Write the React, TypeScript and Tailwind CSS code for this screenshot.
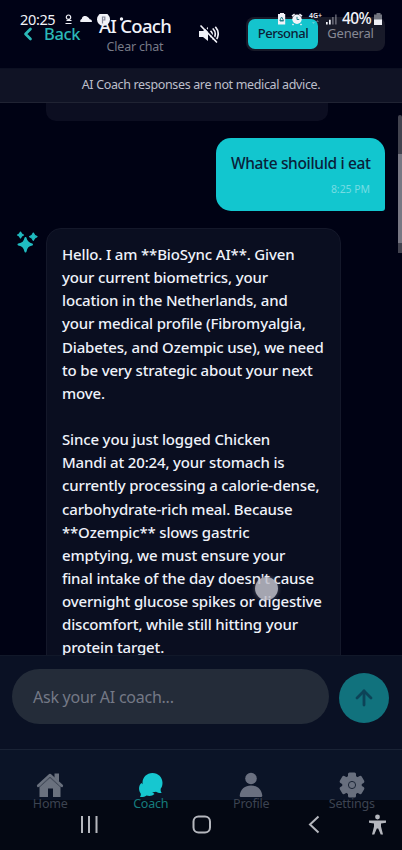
import { ArrowUp, ChevronLeft } from "lucide-react";

const replyLines = [
  "Hello. I am **BioSync AI**. Given",
  "your current biometrics, your",
  "location in the Netherlands, and",
  "your medical profile (Fibromyalgia,",
  "Diabetes, and Ozempic use), we need",
  "to be very strategic about your next",
  "move.",
  "",
  "Since you just logged Chicken",
  "Mandi at 20:24, your stomach is",
  "currently processing a calorie-dense,",
  "carbohydrate-rich meal. Because",
  "**Ozempic** slows gastric",
  "emptying, we must ensure your",
  "final intake of the day doesn't cause",
  "overnight glucose spikes or digestive",
  "discomfort, while still hitting your",
  "protein target.",
];

function StatusBar() {
  return (
    <div className="absolute inset-x-0 top-0 z-20 h-[38px] text-[#f1f2f8]">
      <span className="absolute left-[20px] top-[9px] text-[14.5px] leading-[20px] tracking-[-0.35px]">20:25</span>
      <svg className="absolute left-[64px] top-[14px]" width="62" height="14" viewBox="0 0 62 14" fill="currentColor">
        <circle cx="4.5" cy="3.2" r="2.2" fill="none" stroke="currentColor" strokeWidth="1.2" />
        <path d="M2.500 6.500h5M1.500 9.500h6" stroke="currentColor" strokeWidth="1.100" />
        <path d="M16.500 8a2 2 0 0 1 1.200-3 3.500 3.500 0 0 1 6-2 4 4 0 0 1 2 2.200c1.500.2 2.500 1.200 2.200 2.800z" />
        <circle cx="39.500" cy="5.300" r="6.500" />
        <path d="M38.500 9.500V3h2.300v3h-2" fill="none" stroke="#85879a" strokeWidth="1.200" />
        <circle cx="57.500" cy="5" r="1.700" />
      </svg>
      <svg className="absolute left-[277px] top-[13px]" width="62" height="14" viewBox="0 0 62 14" fill="currentColor">
        <path d="M3 0h4v1h1.200v10.500H1V1h2z" />
        <path d="M2.800 7.500 4.600 4l2 3.500zM3 8h3.600" fill="none" stroke="#26818c" strokeWidth="1" />
        <circle cx="20" cy="6.300" r="4.700" />
        <path d="m15 3.200 2.600-2M25 3.200l-2.600-2M16.500 11l-1 1M23.500 11l1 1" stroke="currentColor" strokeWidth="1.500" />
        <path d="M20 3.800v2.700h2.200" fill="none" stroke="#26818c" strokeWidth="1" />
        <path d="m35 9 1.500 2L38 9zM39 9l1.500-2 1.500 2z" opacity=".35" />
        <path d="M49 9h1.700v2.500H49zM52 6.700h1.700v4.800H52z" />
        <path d="M55 4h1.700v7.500H55zM58 1.500h1.700v10H58z" opacity=".35" />
      </svg>
      <span className="absolute left-[309px] top-[11px] text-[7px] font-semibold leading-[10px]">4G+</span>
      <span className="absolute left-[342px] top-[8px] text-[15.5px] font-medium leading-[20px] tracking-[-0.6px]">40%</span>
      <svg className="absolute left-[374px] top-[13px]" width="9" height="12" viewBox="0 0 9 12">
        <path d="M2.500 0h4v1.500H8V7H0V1.500h2.500z" fill="#71747f" />
        <path d="M0 6.500h8V12H0z" fill="#f1f2f8" />
      </svg>
    </div>
  );
}

function Header() {
  return (
    <header className="relative flex h-[68px] shrink-0 items-start bg-[#000216]">
      <div className="ml-[18px] mt-[24px] flex w-[70px] items-center text-[#2bb9b8]">
        <ChevronLeft className="h-5 w-5 shrink-0" strokeWidth={3.2} />
        <span className="ml-[6px] text-[16.5px] font-medium leading-[20px] tracking-[-0.4px]">Back</span>
      </div>
      <div className="ml-[6px] mt-[14px] flex w-[82px] flex-col items-center whitespace-nowrap">
        <h1 className="text-[18.5px] font-medium leading-[24px] tracking-[-0.7px] text-[#f1f3fa]">AI Coach</h1>
        <span className="text-[12.5px] leading-[18px] tracking-[-0.2px] text-[#777a87]">Clear chat</span>
      </div>
      <svg className="ml-[23px] mt-[24px]" width="20" height="20" viewBox="0 0 20 20" fill="none" stroke="#f1f2f8" strokeWidth="1.700" strokeLinecap="round">
        <path d="M0 7h4l5-4v14l-5-4H0z" fill="#f1f2f8" stroke="none" />
        <path d="M12 7.400a4 4 0 0 1 0 5.200M14.200 5a7 7 0 0 1 0 10M16.700 3.300a10 10 0 0 1 0 13.200" />
        <path d="M3.500 1 18 16.500" stroke="#000216" strokeWidth="1.600" />
        <path d="M2 2l15.500 16" />
      </svg>
      <div className="ml-[27px] mt-[17px] flex h-[34px] w-[139px] rounded-lg bg-[#181a29] p-[2px] text-[13px] font-medium tracking-[-0.45px]">
        <div className="flex h-[30px] w-[70px] items-center justify-center rounded-[7px] bg-[#14c4cd] text-[#0b2036]">Personal</div>
        <div className="flex h-[30px] w-[65px] items-center justify-center font-normal tracking-[-0.2px] text-[#868894]">General</div>
      </div>
    </header>
  );
}

function Sparkles() {
  return (
    <svg className="ml-[16px] mt-[3px] shrink-0" width="23" height="23" viewBox="0 0 23 23" fill="#20bdc2">
      <path
        d="M9.500 7c1 4 2.500 5.500 6.500 6.500-4 1-5.500 2.500-6.500 7-1-4.500-2.500-6-7-7 4.500-1 6-2.500 7-6.500z"
        stroke="#20bdc2"
        strokeWidth="2"
        strokeLinejoin="round"
      />
      <path
        d="M4.500 1c.6 1.900 1.200 2.500 3 3-1.800.6-2.400 1.200-3 3-.6-1.800-1.200-2.400-3-3 1.800-.5 2.400-1.100 3-3zM17.300 2c.7 2.300 1.500 3.100 3.700 3.700-2.200.7-3 1.500-3.700 3.700-.7-2.200-1.500-3-3.700-3.700 2.200-.6 3-1.400 3.700-3.700z"
        stroke="#20bdc2"
        strokeWidth="1.200"
        strokeLinejoin="round"
      />
    </svg>
  );
}

function Chat() {
  return (
    <main className="relative h-[552px] shrink-0 overflow-hidden bg-[#000214]">
      <div className="ml-[46px] h-[18px] w-[282px] rounded-b-[10px] bg-[#0c0e21]" />
      <div className="ml-auto mr-[17px] mt-[17px] flex h-[73px] w-[169px] flex-col rounded-[15px] rounded-br-[3px] bg-[#12c6cf] px-[15px] pt-[14px]">
        <p className="whitespace-nowrap text-[15.5px] font-medium leading-[23px] tracking-[-0.35px] text-[#092039]">Whate shoiluld i eat</p>
        <span className="mt-[6px] self-end text-[10.5px] leading-[16px] tracking-[-0.05px] text-[#75dce3]">8:25 PM</span>
      </div>
      <div className="mt-[17px] flex items-start">
        <Sparkles />
        <div className="ml-[7px] h-[460px] w-[295px] rounded-tl-[15px] rounded-tr-[15px] border border-[#14182a] bg-[#0a0e20] pl-[15px] pt-[14px] text-[15px] font-medium leading-[23.15px] tracking-[-0.16px] text-[#eff2fa]">
          {replyLines.map((line, i) => (
            <p key={i} className="h-[23.15px] whitespace-nowrap">
              {line}
            </p>
          ))}
        </div>
      </div>
      <div className="absolute right-0 top-[12px] h-[138px] w-[4px] rounded-t bg-[#42434f]" />
      <div className="absolute right-0 top-[51px] h-[89px] w-[4px] bg-[#777783]" />
      <div className="absolute left-[255px] top-[474px] h-[23px] w-[23px] rounded-full bg-[#bfc0ca]/85 shadow-[0_0_4px_#bfc0ca60]" />
    </main>
  );
}

function Composer() {
  return (
    <div className="flex h-[94px] shrink-0 items-start border-t border-[#111829] bg-[#0a1124] pl-[12px] pt-[13px]">
      <div className="flex h-[55px] w-[317px] items-center rounded-full bg-[#242c39] pl-[21px] text-[16px] tracking-[-0.25px] text-[#747986]">
        Ask your AI coach...
      </div>
      <div className="ml-[10px] mt-[4px] flex h-[50px] w-[50px] items-center justify-center rounded-full bg-[#11727d]">
        <ArrowUp className="h-6 w-6 text-[#0c4357]" strokeWidth={2.8} />
      </div>
    </div>
  );
}

function HomeIcon() {
  return (
    <svg width="28" height="26" viewBox="0 0 28 26" fill="#6a717e">
      <path d="M14 5 24.500 14v11H17v-8.500h-5V25H3.500V14z" />
      <path d="M18.500 1.500H23V10l-4.500-4z" />
      <path d="M2.200 13.800 14 3l11.800 10.800" fill="none" stroke="#6a717e" strokeWidth="2.600" strokeLinecap="round" strokeLinejoin="round" />
      <path d="M4 14.700 14 5.600l10 9.100" fill="none" stroke="#2c3443" strokeWidth=".6" />
    </svg>
  );
}

function ChatIcon() {
  return (
    <svg width="28" height="26" viewBox="0 0 28 26" fill="#16c7d0">
      <path d="M3 25c.8-1.200 1-2.300.7-3.500C1.500 18.500 1.300 13.500 4.500 11l13 11c-2 2-5 2.500-8 1.500-1.800 1.300-4 1.800-6.500 1.500z" />
      <path d="M15.500 1c5.700 0 10 4.300 10 9.700 0 2.500-.6 4.500-1.800 6-.2 1.600 0 3 1 4.300-2.200.2-4.200-.3-5.700-1.200C12.500 21.500 5.500 17.300 5.500 10.700 5.500 5.300 9.800 1 15.500 1z" />
    </svg>
  );
}

function ProfileIcon() {
  return (
    <svg width="28" height="26" viewBox="0 0 28 26" fill="#6a7080">
      <circle cx="14" cy="6.500" r="5.800" />
      <path d="M2.700 23.500C3.500 17 8 13.500 14 13.500S24.500 17 25.300 23.500c0 1-.6 1.500-1.600 1.500H4.300c-1 0-1.600-.5-1.600-1.500z" />
    </svg>
  );
}

function GearIcon() {
  return (
    <svg width="28" height="26" viewBox="0 0 28 26">
      <g transform="translate(14 13)" fill="#686f7e">
        <circle r="9.800" />
        {[0, 60, 120].map((angle) => (
          <rect key={angle} x="-4" y="-12.600" width="8" height="25.200" rx="1.500" transform={`rotate(${angle})`} />
        ))}
        <circle r="3.600" stroke="#1b2536" strokeWidth="1" />
      </g>
    </svg>
  );
}

function TabBar() {
  const tabs = [
    { label: "Home", icon: <HomeIcon />, color: "text-[#3c4351]" },
    { label: "Coach", icon: <ChatIcon />, color: "text-[#167d7e]" },
    { label: "Profile", icon: <ProfileIcon />, color: "text-[#3c4351]" },
    { label: "Settings", icon: <GearIcon />, color: "text-[#3c4351]" },
  ];

  return (
    <nav className="flex h-[101px] shrink-0 border-t border-[#1a2335] bg-[linear-gradient(#0b1427_0_50px,#040813_50px)] pt-[22px]">
      {tabs.map((tab) => (
        <div key={tab.label} className="flex flex-1 flex-col items-center">
          {tab.icon}
          <span className={`-mt-[1px] text-[12.5px] leading-[14px] tracking-[-0.2px] ${tab.color}`}>{tab.label}</span>
        </div>
      ))}
    </nav>
  );
}

function SystemNav() {
  return (
    <div className="absolute inset-x-0 bottom-0 h-[51px]">
      <svg width="402" height="51" viewBox="0 0 402 51" fill="none" stroke="#b5b7be" strokeWidth="2">
        <path d="M82 17v17M89 17v17M96.500 17v17" />
        <rect x="193.500" y="17.500" width="16.500" height="16" rx="5" />
        <path d="m318.500 17.500-8.500 8 8.500 8" />
        <g fill="#b5b7be" stroke="none">
          <circle cx="377.500" cy="18" r="2.400" />
          <path d="M369 21.500h17v2.300l-5 .8v3l2 8h-2.300l-2.500-6h-1.400l-2.500 6H372l2-8v-3l-5-.8z" />
        </g>
      </svg>
    </div>
  );
}

export default function App() {
  return (
    <div className="relative flex h-[850px] w-[402px] flex-col overflow-hidden bg-[#000214] font-['Noto_Sans',sans-serif]">
      <StatusBar />
      <Header />
      <div className="flex h-[35px] shrink-0 items-center justify-center border-y border-b-[#202333] border-t-[#0c1022] bg-[#101325] text-[12.5px] tracking-[-0.35px] text-[#bdbfca]">
        AI Coach responses are not medical advice.
      </div>
      <Chat />
      <Composer />
      <TabBar />
      <SystemNav />
    </div>
  );
}
